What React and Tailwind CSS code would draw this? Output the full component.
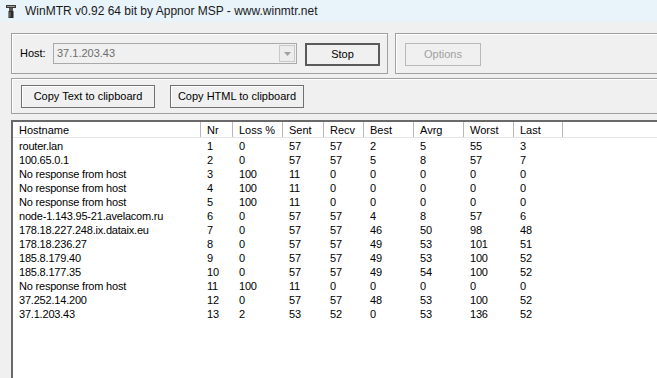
import React from "react";

const rows = [
  ["router.lan", 1, 0, 57, 57, 2, 5, 55, 3],
  ["100.65.0.1", 2, 0, 57, 57, 5, 8, 57, 7],
  ["No response from host", 3, 100, 11, 0, 0, 0, 0, 0],
  ["No response from host", 4, 100, 11, 0, 0, 0, 0, 0],
  ["No response from host", 5, 100, 11, 0, 0, 0, 0, 0],
  ["node-1.143.95-21.avelacom.ru", 6, 0, 57, 57, 4, 8, 57, 6],
  ["178.18.227.248.ix.dataix.eu", 7, 0, 57, 57, 46, 50, 98, 48],
  ["178.18.236.27", 8, 0, 57, 57, 49, 53, 101, 51],
  ["185.8.179.40", 9, 0, 57, 57, 49, 53, 100, 52],
  ["185.8.177.35", 10, 0, 57, 57, 49, 54, 100, 52],
  ["No response from host", 11, 100, 11, 0, 0, 0, 0, 0],
  ["37.252.14.200", 12, 0, 57, 57, 48, 53, 100, 52],
  ["37.1.203.43", 13, 2, 53, 52, 0, 53, 136, 52],
];

const columns = [
  { label: "Hostname", w: "w-[188px]" },
  { label: "Nr", w: "w-[32px]" },
  { label: "Loss %", w: "w-[50px]" },
  { label: "Sent", w: "w-[41px]" },
  { label: "Recv", w: "w-[40px]" },
  { label: "Best", w: "w-[50px]" },
  { label: "Avrg", w: "w-[50px]" },
  { label: "Worst", w: "w-[50px]" },
  { label: "Last", w: "w-[49px]" },
];

const AppIcon = () => (
  <svg width="10" height="13" viewBox="0 0 10 13">
    <rect x="0" y="0" width="10" height="3" fill="#3a3a3a" />
    <rect x="1" y="1" width="8" height="1" fill="#9a9a9a" />
    <rect x="3" y="3" width="4" height="3" fill="#555" />
    <rect x="2.5" y="6" width="5" height="7" fill="#2a2a2a" />
    <rect x="3.5" y="7" width="1" height="5" fill="#888" />
  </svg>
);

const Button = ({ children, className = "", variant = "normal" }) => {
  const styles = {
    normal: "border border-[#707070] text-black shadow-[inset_1px_1px_0_#ffffff]",
    default: "border-2 border-[#5a5a5a] text-black",
    disabled: "border border-[#b9b9b9] text-[#a0a0a0]",
  };
  return (
    <div className={`flex items-center justify-center bg-[#f0f0f0] ${styles[variant]} ${className}`}>
      {children}
    </div>
  );
};

const App = () => {
  return (
    <div
      className="w-[657px] h-[378px] overflow-hidden bg-[#f0f0f0] text-[11px] leading-none text-black"
      style={{ fontFamily: '"Liberation Sans", Arial, sans-serif' }}
    >
      <div className="w-[700px]">
        <div className="flex h-[22px] items-center gap-[9px] bg-[#e9f3fa] pl-[6px]">
          <AppIcon />
          <span className="text-[12px] text-[#1a1a1a]">
            WinMTR v0.92 64 bit by Appnor MSP - www.winmtr.net
          </span>
        </div>

        <div className="ml-[11px] mt-[11px] flex gap-[7px]">
          <div className="flex h-[41px] w-[377px] items-start border border-[#a0a0a0] pl-[8px] pt-[9px] shadow-[inset_1px_1px_0_#ffffff]">
            <span className="mt-[5px] w-[33px]">Host:</span>
            <div className="flex h-[21px] w-[244px] items-stretch border border-[#a9a9a9] bg-[#f0f0f0] p-[1px]">
              <span className="flex-1 pl-[2px] pt-[3px] text-[#6d6d6d]">37.1.203.43</span>
              <div className="flex w-[16px] items-center justify-center border border-[#c8c8c8] bg-[#ececec]">
                <svg width="7" height="4" viewBox="0 0 7 4">
                  <path d="M0 0H7L3.5 4Z" fill="#a0a0a0" />
                </svg>
              </div>
            </div>
            <Button variant="default" className="ml-[8px] h-[23px] w-[75px]">
              Stop
            </Button>
          </div>
          <div className="h-[41px] flex-1 border border-[#a0a0a0] pl-[9px] pt-[9px] shadow-[inset_1px_1px_0_#ffffff]">
            <Button variant="disabled" className="h-[23px] w-[76px]">
              Options
            </Button>
          </div>
        </div>

        <div className="ml-[11px] mt-[4px] flex h-[36px] gap-[15px] border border-[#a0a0a0] pl-[9px] pt-[6px] shadow-[inset_1px_1px_0_#ffffff]">
          <Button className="h-[23px] w-[134px]">Copy Text to clipboard</Button>
          <Button className="h-[23px] w-[134px]">Copy HTML to clipboard</Button>
        </div>

        <div className="ml-[11px] mt-[6px] h-[260px] border-l-2 border-t-2 border-l-[#696969] border-t-[#696969] bg-white">
          <div className="flex h-[16px] border-b border-[#e5e5e5]">
            {columns.map((col) => (
              <div
                key={col.label}
                className={`${col.w} flex items-center border-r border-[#b8b8b8] pl-[6px] pt-[1px]`}
              >
                {col.label}
              </div>
            ))}
            <div className="flex-1" />
          </div>
          <div className="pt-[1px] tracking-[-0.2px]">
            {rows.map((row, i) => (
              <div key={i} className="flex h-[14px] items-center">
                {row.map((cell, j) => (
                  <div key={j} className={`${columns[j].w} pl-[6px]`}>
                    {cell}
                  </div>
                ))}
              </div>
            ))}
          </div>
        </div>
      </div>
    </div>
  );
};

export default App;
